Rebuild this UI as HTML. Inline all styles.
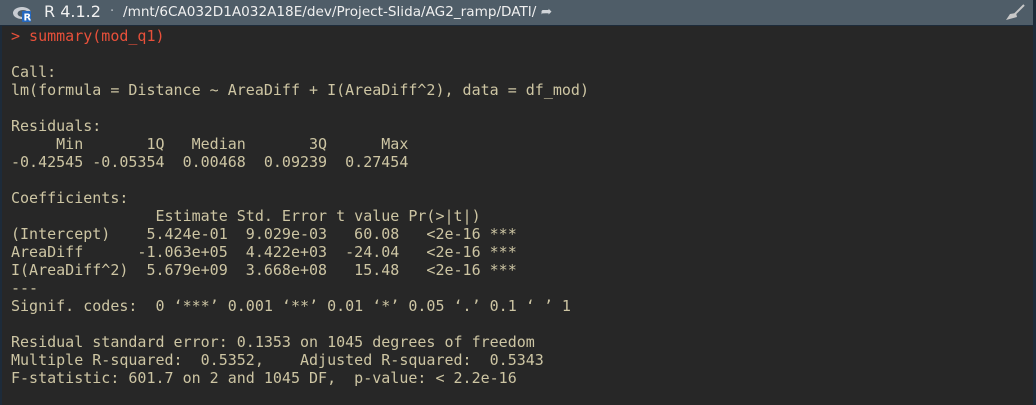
<!DOCTYPE html>
<html><head><style>
html,body{margin:0;padding:0;width:1036px;height:405px;overflow:hidden;background:#272727}
.hdr{position:absolute;left:0;top:0;width:1036px;height:25px;background:#4f5d68;border-bottom:1px solid #1d2b3a}
.hdr .t{position:absolute;left:44px;top:2px;font:16px "DejaVu Sans","Liberation Sans",sans-serif;color:#f0f0f0}
.hdr .d{position:absolute;left:110px;top:4px;font:13px "DejaVu Sans",sans-serif;color:#c0c6cc}
.hdr .p{position:absolute;left:123px;top:4px;font:13.6px "DejaVu Sans","Liberation Sans",sans-serif;color:#f0f0f0}
.edge{position:absolute;right:0;top:0;width:3px;height:405px;background:#1d2b3a}
.edgel{position:absolute;left:0;top:26px;width:2px;height:379px;background:#1d2b3a}
pre{position:absolute;left:11px;top:27px;margin:0;font:15px/18px "DejaVu Sans Mono","Liberation Mono",monospace;color:#cdc5a3}
.r{color:#e8503a}
</style></head><body>
<div class="hdr">
<svg style="position:absolute;left:12px;top:5px" width="22" height="17" viewBox="0 0 22 17"><ellipse cx="10" cy="8" rx="9" ry="6" fill="#c8ccd2"/><ellipse cx="11" cy="8.5" rx="5.5" ry="3.5" fill="#4f5d68"/><rect x="10" y="6" width="9" height="11" rx="1" fill="#2468c0"/><text x="11.5" y="15.5" font-family="DejaVu Sans" font-weight="bold" font-size="10" fill="#fff">R</text></svg>
<span class="t">R 4.1.2</span><span class="d">·</span><span class="p">/mnt/6CA032D1A032A18E/dev/Project-Slida/AG2_ramp/DATI/ <span style="color:#d0d4d8">➦</span></span>
<svg style="position:absolute;left:1002px;top:3px" width="24" height="18" viewBox="0 0 24 18"><line x1="22" y1="2" x2="13" y2="11" stroke="#c8c8c8" stroke-width="2"/><path d="M8 11 L14 10 L15 14 L4 17 Z" fill="#c8c8c8"/></svg>
</div>
<div class="edge"></div><div class="edgel"></div>
<pre><span class="r">&gt; summary(mod_q1)</span>

Call:
lm(formula = Distance ~ AreaDiff + I(AreaDiff^2), data = df_mod)

Residuals:
     Min       1Q   Median       3Q      Max 
-0.42545 -0.05354  0.00468  0.09239  0.27454 

Coefficients:
                Estimate Std. Error t value Pr(&gt;|t|)    
(Intercept)    5.424e-01  9.029e-03   60.08   &lt;2e-16 ***
AreaDiff      -1.063e+05  4.422e+03  -24.04   &lt;2e-16 ***
I(AreaDiff^2)  5.679e+09  3.668e+08   15.48   &lt;2e-16 ***
---
Signif. codes:  0 ‘***’ 0.001 ‘**’ 0.01 ‘*’ 0.05 ‘.’ 0.1 ‘ ’ 1

Residual standard error: 0.1353 on 1045 degrees of freedom
Multiple R-squared:  0.5352,	Adjusted R-squared:  0.5343 
F-statistic: 601.7 on 2 and 1045 DF,  p-value: &lt; 2.2e-16
</pre>
</body></html>
